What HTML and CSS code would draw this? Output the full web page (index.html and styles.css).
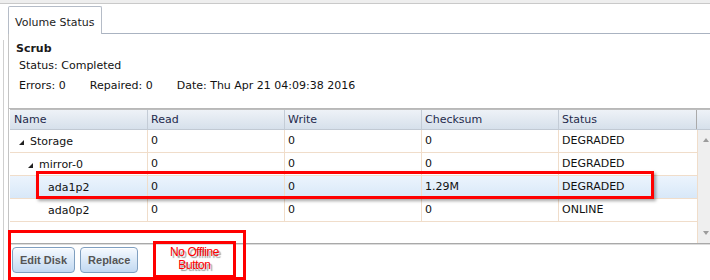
FILE: index.html
```html
<!DOCTYPE html>
<html>
<head>
    <link rel="stylesheet" href="styles.css">
</head>
<body>
    <div class="topbar"></div>
    <div class="frame">
        <div class="gutter">
            <div class="splitter"></div>
        </div>
        <div class="main">
            <div class="tabs">
                <div class="tab">Volume Status</div>
            </div>
            <div class="content">
                <div class="pane">
                    <div class="scrub-title">Scrub</div>
                    <div class="scrub-line">Status: Completed</div>
                    <div class="scrub-line scrub-stats">
                        <span>Errors: 0</span>
                        <span>Repaired: 0</span>
                        <span>Date: Thu Apr 21 04:09:38 2016</span>
                    </div>
                </div>

                <div class="grid">
                    <div class="grid-head">
                        <div class="hcell name">Name</div>
                        <div class="hcell">Read</div>
                        <div class="hcell">Write</div>
                        <div class="hcell">Checksum</div>
                        <div class="hcell">Status</div>
                        <div class="hcell filler"></div>
                    </div>
                    <div class="grid-body">
                        <div class="rows">
                            <div class="row">
                                <div class="cell name lvl0"><span class="expando"></span>Storage</div>
                                <div class="cell">0</div>
                                <div class="cell">0</div>
                                <div class="cell">0</div>
                                <div class="cell">DEGRADED</div>
                            </div>
                            <div class="row">
                                <div class="cell name lvl1"><span class="expando"></span>mirror-0</div>
                                <div class="cell">0</div>
                                <div class="cell">0</div>
                                <div class="cell">0</div>
                                <div class="cell">DEGRADED</div>
                            </div>
                            <div class="row selected">
                                <div class="cell name lvl2"><span class="expando leaf"></span>ada1p2</div>
                                <div class="cell">0</div>
                                <div class="cell">0</div>
                                <div class="cell">1.29M</div>
                                <div class="cell">DEGRADED</div>
                            </div>
                            <div class="row">
                                <div class="cell name lvl2"><span class="expando leaf"></span>ada0p2</div>
                                <div class="cell">0</div>
                                <div class="cell">0</div>
                                <div class="cell">0</div>
                                <div class="cell">ONLINE</div>
                            </div>
                        </div>
                        <div class="scrollbar">
                            <span class="arrow up"></span>
                            <span class="arrow down"></span>
                        </div>
                    </div>
                </div>

                <div class="toolbar">
                    <button class="btn">Edit Disk</button>
                    <button class="btn">Replace</button>
                </div>
            </div>
        </div>
    </div>

    <!-- annotations drawn over the screenshot -->
    <div class="mark mark-row"></div>
    <div class="mark mark-toolbar"></div>
    <div class="mark mark-note">No Offline<br>Button</div>
</body>
</html>
```

FILE: styles.css
```css
body {
    margin: 0;
    width: 710px;
    height: 280px;
    overflow: hidden;
    position: relative;
    background-color: #fff;
    font-family: "DejaVu Sans", Verdana, sans-serif;
    font-size: 11px;
    color: #111;
}

.topbar {
    height: 3px;
    background-color: #eeeeee;
    border-bottom: 1px solid #c9c9c9;
}

.frame {
    display: flex;
    height: 276px;
}

.gutter {
    width: 8px;
    position: relative;
}

.splitter {
    margin-top: 36px;
    margin-left: 3px;
    width: 1px;
    height: 240px;
    background-color: #cfcfcf;
}

.main {
    flex: 1;
    display: flex;
    flex-direction: column;
}

/* Tabs */
.tabs {
    height: 30px;
    box-sizing: border-box;
    padding-top: 2px;
    display: flex;
    align-items: flex-end;
    border-bottom: 1px solid #aab3c1;
}

.tab {
    height: 28px;
    box-sizing: border-box;
    margin-bottom: -1px;
    padding: 8px 7px 0 6px;
    line-height: 15px;
    color: #1c1c1c;
    background-color: #fff;
    border: 1px solid #b5bcc7;
    border-bottom: none;
    border-radius: 2px 2px 0 0;
}

.content {
    flex: 1;
    border-left: 1px solid #c4c4c4;
    display: flex;
    flex-direction: column;
}

/* Scrub pane */
.pane {
    height: 75px;
    box-sizing: border-box;
    padding: 7px 0 0 7px;
    border-bottom: 1px solid #b8b8b8;
    line-height: 15px;
}

.scrub-title {
    font-weight: bold;
    color: #1a1a1a;
}

.scrub-line {
    margin-top: 2px;
    margin-left: 3px;
}

.scrub-stats {
    margin-top: 5px;
    display: flex;
    gap: 24px;
}

/* Grid */
.grid {
    margin-left: 1px;
    border-top: 1px solid #bdbdbd;
}

.grid-head {
    display: grid;
    grid-template-columns: 138px 137px 137px 137px 138px 1fr;
    height: 20px;
    box-sizing: border-box;
    border-bottom: 1px solid #c1c9d3;
    background: linear-gradient(#eef2f7, #d6e0eb);
}

.hcell {
    box-sizing: border-box;
    padding: 0 3px;
    line-height: 19px;
    color: #1f2a4c;
    border-right: 1px solid #c4ccd6;
}

.hcell.name {
    padding-left: 4px;
}

.hcell.filler {
    border-right: none;
    border-left: 1px solid #aaaaaa;
    margin-left: -1px;
}

.grid-body {
    display: flex;
    height: 113px;
}

.rows {
    width: 687px;
    border-right: 1px solid #f0ddca;
}

.row {
    display: grid;
    grid-template-columns: 138px 137px 137px 137px 137px;
    height: 23px;
    box-sizing: border-box;
    border-bottom: 1px solid #f0ddca;
}

.row.selected {
    background: linear-gradient(#ecf4fd, #d8e8f8);
}

.cell {
    box-sizing: border-box;
    padding: 0 3px;
    line-height: 21px;
    border-right: 1px solid #f0ddca;
    white-space: nowrap;
}

.cell:last-child {
    border-right: none;
}

.cell.name {
    display: flex;
    align-items: center;
}

.cell.lvl0 { padding-left: 9px; }
.cell.lvl1 { padding-left: 18px; }
.cell.lvl2 { padding-left: 27px; }

.expando {
    width: 0;
    height: 0;
    margin-right: 6px;
    margin-top: 2px;
    border-left: 5px solid transparent;
    border-bottom: 5px solid #222;
}

.expando.leaf {
    border-bottom-color: transparent;
}

.scrollbar {
    flex: 1;
    background-color: #efefef;
    position: relative;
}

.arrow {
    position: absolute;
    left: 5px;
    width: 0;
    height: 0;
    border-left: 3px solid transparent;
    border-right: 3px solid transparent;
}

.arrow.up {
    top: 8px;
    border-bottom: 4px solid #9c9c9c;
}

.arrow.down {
    bottom: 8px;
    border-top: 4px solid #9c9c9c;
}

/* Toolbar */
.toolbar {
    flex: 1;
    border-top: 1px solid #a9a9a9;
    box-shadow: inset 0 1px #dcdcdc;
    padding: 3px 0 0 3px;
    display: flex;
    align-items: flex-start;
    gap: 5px;
}

.btn {
    height: 26px;
    padding: 0 7px;
    font-family: "Liberation Sans", Arial, sans-serif;
    font-size: 11px;
    font-weight: bold;
    color: #555;
    border: 1px solid #7f9fc0;
    border-radius: 4px;
    background: linear-gradient(#f6faff, #dbe9f8 50%, #c2d9f2);
    box-shadow: inset 0 1px 0 #fff;
}

/* Red annotation boxes */
.mark {
    position: absolute;
    box-sizing: border-box;
    border: 3px solid #f00;
}

.mark-row {
    left: 36px;
    top: 171px;
    width: 618px;
    height: 28px;
    box-shadow: 2px 2px 3px rgba(0, 0, 0, 0.35);
}

.mark-toolbar {
    left: 8px;
    top: 230px;
    width: 238px;
    height: 50px;
}

.mark-note {
    left: 153px;
    top: 241px;
    width: 83px;
    height: 37px;
    padding-top: 2px;
    text-align: center;
    font-family: "Liberation Sans", Arial, sans-serif;
    font-size: 12px;
    line-height: 13px;
    letter-spacing: -0.4px;
    color: #f00;
    text-shadow: 2px 2px 1px #9a9a9a;
}
```
